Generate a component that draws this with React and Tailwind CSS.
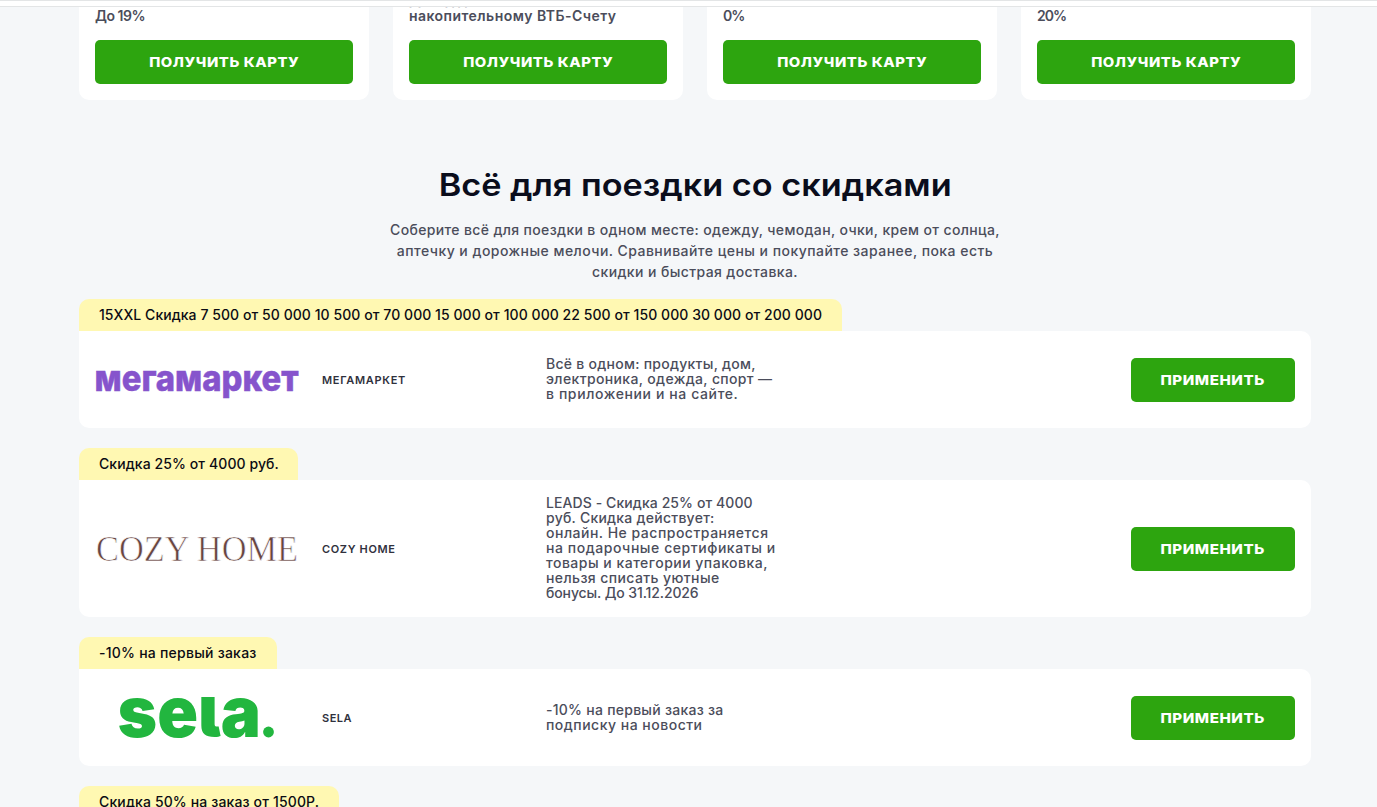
import React from 'react';

const CARDS = [
  { rate: 'До 19%', tracking: 'tracking-[-0.48px]' },
  { above: 'Доход до 18% по', rate: 'накопительному ВТБ-Счету', tracking: 'tracking-[0.45px]' },
  { rate: '0%', tracking: 'tracking-[-1.1px]' },
  { rate: '20%', tracking: 'tracking-[-1px]' },
];

function MegamarketLogo() {
  return (
    <svg width="204" height="65" viewBox="0 0 204 65" overflow="visible" role="img" aria-label="мегамаркет">
      <text
        x="-0.5"
        y="44"
        textLength="204"
        lengthAdjust="spacingAndGlyphs"
        className="fill-[#8654cc] stroke-[#8654cc] font-['Inter',sans-serif] text-[36px] font-extrabold"
        strokeWidth="0.5"
      >
        мегамаркет
      </text>
    </svg>
  );
}

function CozyHomeLogo() {
  return (
    <svg width="204" height="65" viewBox="0 0 204 65" overflow="visible" role="img" aria-label="COZY HOME">
      {/* white stroke thins the serif down to hairlines */}
      <text
        x="1"
        y="44.5"
        textLength="202"
        lengthAdjust="spacingAndGlyphs"
        className="fill-[#684542] stroke-white font-['Liberation_Serif',serif] text-[36px]"
        strokeWidth="0.7"
      >
        COZY HOME
      </text>
    </svg>
  );
}

function SelaLogo() {
  return (
    <svg width="204" height="65" viewBox="0 0 204 65" role="img" aria-label="sela.">
      {/* the l is cut at x-height */}
      <clipPath id="sela-clip">
        <rect x="0" y="12" width="204" height="53" />
      </clipPath>
      <text
        x="22.5"
        y="52"
        textLength="143.5"
        lengthAdjust="spacingAndGlyphs"
        clipPath="url(#sela-clip)"
        className="fill-[#22b63f] font-['Inter',sans-serif] text-[71px] font-black [font-feature-settings:'cv05']"
      >
        sela
      </text>
      <circle cx="173.500" cy="47" r="5.400" fill="#22b63f" />
    </svg>
  );
}

const OFFERS = [
  {
    name: 'МЕГАМАРКЕТ',
    nameTracking: 'tracking-[0.69px]',
    logo: MegamarketLogo,
    tag: '15XXL Скидка 7 500 от 50 000 10 500 от 70 000 15 000 от 100 000 22 500 от 150 000 30 000 от 200 000',
    tagStyle: 'w-[763px] tracking-[0.06px]',
    lines: [
      ['Всё в одном: продукты, дом,', 'tracking-[0.27px]'],
      ['электроника, одежда, спорт —', 'tracking-[0.36px]'],
      ['в приложении и на сайте.', 'tracking-[0.61px]'],
    ],
  },
  {
    name: 'COZY HOME',
    nameTracking: 'tracking-[0.65px]',
    logo: CozyHomeLogo,
    tag: 'Скидка 25% от 4000 руб.',
    tagStyle: 'w-[219px] tracking-[0.09px]',
    lines: [
      ['LEADS - Скидка 25% от 4000', 'tracking-[0.09px]'],
      ['руб. Скидка действует:', 'tracking-[0.25px]'],
      ['онлайн. Не распространяется', 'tracking-[0.5px]'],
      ['на подарочные сертификаты и', 'tracking-[0.56px]'],
      ['товары и категории упаковка,', 'tracking-[0.49px]'],
      ['нельзя списать уютные', 'tracking-[0.4px]'],
      ['бонусы. До 31.12.2026', 'tracking-[-0.11px]'],
    ],
  },
  {
    name: 'SELA',
    nameTracking: 'tracking-[0.49px]',
    logo: SelaLogo,
    tag: '-10% на первый заказ',
    tagStyle: 'w-[198px] tracking-[0.24px]',
    lines: [
      ['-10% на первый заказ за', 'tracking-[0.26px]'],
      ['подписку на новости', 'tracking-[0.5px]'],
    ],
  },
];

function Tag({ text, className }) {
  return (
    <div className={`h-8 rounded-t-[10px] bg-[#fff8b2] pl-5 text-sm leading-8 font-medium whitespace-nowrap text-[#0b0b14] ${className}`}>
      {text}
    </div>
  );
}

function BankCard({ above, rate, tracking }) {
  return (
    <div className="flex h-[93px] flex-col justify-end rounded-b-[10px] bg-white px-4 pb-4">
      <div className="mb-4 flex h-[17px] flex-col justify-end overflow-hidden text-sm leading-[17px] font-semibold whitespace-nowrap text-[#4b4d5b]">
        {above && <p className="-mb-px">{above}</p>}
        <p className={tracking}>{rate}</p>
      </div>
      <button type="button" className="h-11 shrink-0 rounded-[5px] bg-[#2da50f] text-[13.5px] font-extrabold tracking-[0.5px] text-white">
        <span className="inline-block scale-x-[1.1]">ПОЛУЧИТЬ КАРТУ</span>
      </button>
    </div>
  );
}

function Offer({ name, nameTracking, logo: Logo, tag, tagStyle, lines }) {
  return (
    <article>
      <Tag text={tag} className={tagStyle} />
      <div className="flex items-center rounded-[10px] rounded-tl-none bg-white p-4">
        <Logo />
        <h3 className={`ml-[23px] w-56 pt-0.5 text-[11px] font-semibold text-[#30313d] ${nameTracking}`}>{name}</h3>
        <p className="-mt-px mb-px text-sm leading-[15px] font-medium whitespace-nowrap text-[#4b4d5b]">
          {lines.map(([line, tracking]) => (
            <span key={line} className={`block ${tracking}`}>{line}</span>
          ))}
        </p>
        <button type="button" className="ml-auto h-11 w-[164px] rounded-[5px] bg-[#2da50f] pt-px text-[13.5px] font-extrabold tracking-[0.5px] text-white">
          <span className="inline-block scale-x-[1.12]">ПРИМЕНИТЬ</span>
        </button>
      </div>
    </article>
  );
}

export default function App() {
  return (
    <div className="h-[807px] w-full overflow-hidden bg-[#f5f7f9] font-['Inter',sans-serif]">
      <header className="h-[7px] border-y border-[#e3e5e6] bg-white" />
      <main className="ml-[79px] w-[1232px]">
        <section className="grid grid-cols-4 gap-6">
          {CARDS.map((card) => (
            <BankCard key={card.rate} {...card} />
          ))}
        </section>
        <section className="pt-[65px]">
          <h2 className="text-center text-[31px] leading-10 font-semibold text-[#0a0d1c]">
            <span className="inline-block scale-x-[1.105]">Всё для поездки со скидками</span>
          </h2>
          <p className="mt-3.5 text-center text-sm leading-[21px] font-medium text-[#4b4d5b]">
            <span className="block tracking-[0.35px]">Соберите всё для поездки в одном месте: одежду, чемодан, очки, крем от солнца,</span>
            <span className="block tracking-[0.46px]">аптечку и дорожные мелочи. Сравнивайте цены и покупайте заранее, пока есть</span>
            <span className="block tracking-[0.39px]">скидки и быстрая доставка.</span>
          </p>
          <div className="mt-[17px] flex flex-col gap-5">
            {OFFERS.map((offer) => (
              <Offer key={offer.name} {...offer} />
            ))}
            <Tag text="Скидка 50% на заказ от 1500Р." className="w-[260px] tracking-[0.14px]" />
          </div>
        </section>
      </main>
    </div>
  );
}
